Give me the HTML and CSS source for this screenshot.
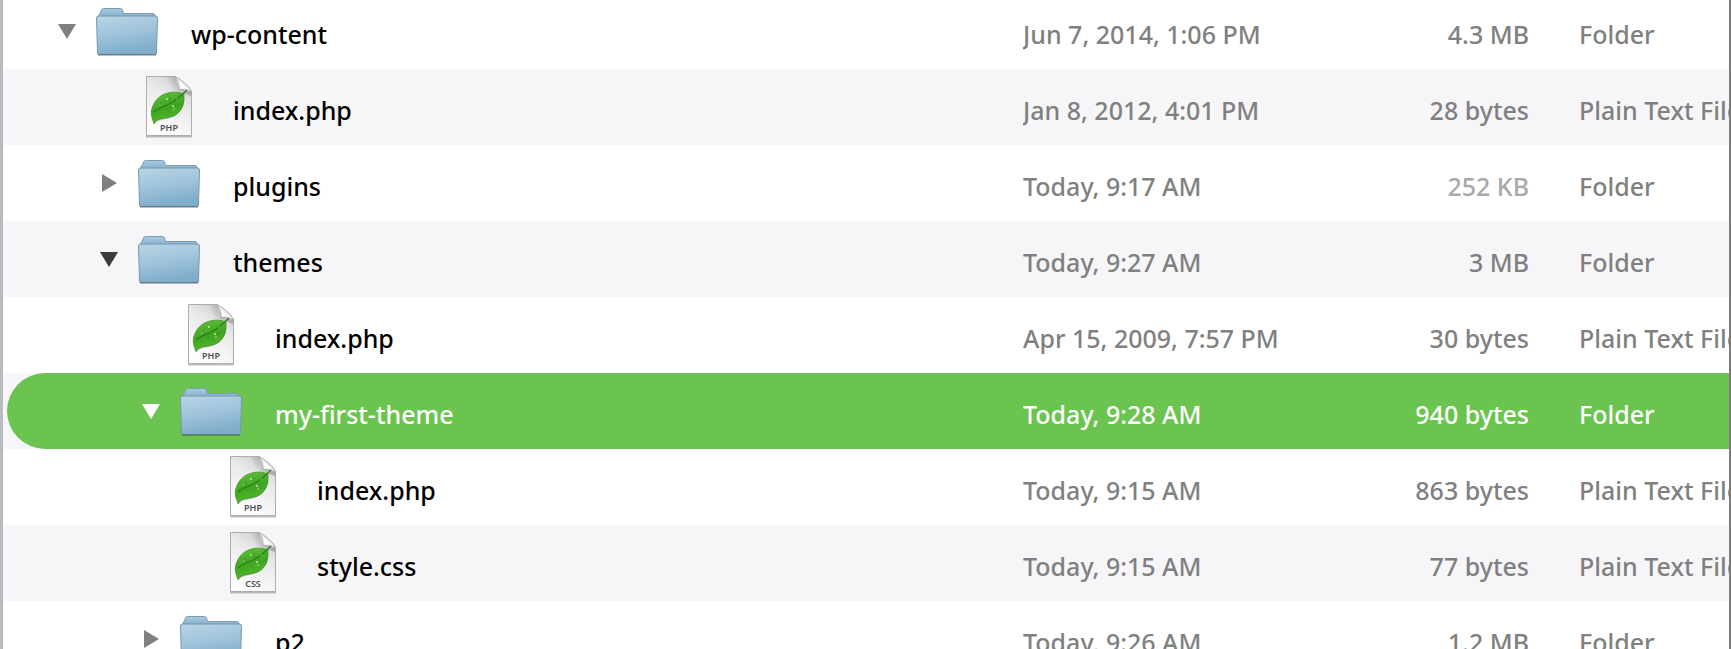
FILE: index.html
```
<!DOCTYPE html>
<html lang="en">
<head>
<meta charset="utf-8">
<title>wp-content</title>
<link rel="stylesheet" href="styles.css">
</head>
<body>
<svg class="defs" aria-hidden="true">
  <defs>
    <linearGradient id="front" x1="0" y1="0" x2="0.25" y2="1">
      <stop offset="0" stop-color="#bad4e5"/><stop offset="0.5" stop-color="#a0c4db"/><stop offset="1" stop-color="#80adcb"/>
    </linearGradient>
    <linearGradient id="back" x1="0" y1="0" x2="0" y2="1">
      <stop offset="0" stop-color="#a9cbe1"/><stop offset="1" stop-color="#82b0cd"/>
    </linearGradient>
    <linearGradient id="paper" x1="1" y1="0" x2="0.5" y2="1">
      <stop offset="0" stop-color="#c4c4c4"/><stop offset="0.45" stop-color="#e9e9e9"/><stop offset="1" stop-color="#fdfdfd"/>
    </linearGradient>
    <linearGradient id="curl" x1="1" y1="0" x2="0" y2="1">
      <stop offset="0.3" stop-color="#b4b4b4"/><stop offset="0.55" stop-color="#ffffff"/><stop offset="1" stop-color="#e4e4e4"/>
    </linearGradient>
    <linearGradient id="shade" x1="1" y1="0" x2="0" y2="0.5">
      <stop offset="0" stop-color="#555" stop-opacity="0.75"/><stop offset="1" stop-color="#999" stop-opacity="0"/>
    </linearGradient>
    <linearGradient id="leaf" x1="0.3" y1="0" x2="0.6" y2="1">
      <stop offset="0" stop-color="#62bd3c"/><stop offset="0.5" stop-color="#3fa522"/><stop offset="1" stop-color="#58bd2b"/>
    </linearGradient>
    <symbol id="folder" viewBox="0 0 64 64">
      <path d="M3 56.5H61" stroke="#000" stroke-opacity="0.25"/>
      <path d="M4 18V16Q4 15 5 14.500L6.500 11Q7 9.500 8.500 9.500H25.500Q27 9.500 27.500 11L28.500 14.500H58Q59.500 14.500 60 16V18Z" fill="url(#back)" stroke="#7e9cb0"/>
      <path d="M3.500 17H60.500Q62.500 17 62.500 19L61.500 54Q61.500 55.500 60 55.500H4Q2.500 55.500 2.500 54L1.500 19Q1.500 17 3.500 17Z" fill="url(#front)" stroke="#7799af"/>
      <path d="M3.500 17.500H60.500" stroke="#8fb3ca"/>
      <path d="M3 55.500H61" stroke="#5e7d93"/>
    </symbol>
    <symbol id="document" viewBox="0 0 64 64">
      <path d="M9 61.500H55" stroke="#000" stroke-opacity="0.25" stroke-width="2"/>
      <path d="M9.500 1.500H38L54.500 16V60.500H9.500Z" fill="url(#paper)" stroke="#adadad"/>
      <path d="M30 2H38L42 14L54 17V21L36 15Z" fill="url(#shade)"/>
      <path d="M37.500 1.500Q42 3 47 7.500Q53 12 54.500 17Q49 13 42 14.500Q42.500 6 37.500 1.500Z" fill="url(#curl)" stroke="#999" stroke-width="0.700"/>
      <path d="M17 49C19 43 27 45 35 41C43 37 47 29 47 19" fill="none" stroke="#000" stroke-opacity="0.2" stroke-width="2"/>
      <path d="M17 48.500C15 43 13 38 15.500 32C18 25 23 20 31 18C37 16.500 43 17 46 19C48 27 46 34 40 39C32 45 21 41 17 48.500Z" fill="url(#leaf)" stroke="#36931f" stroke-width="0.800"/>
      <path d="M17 37C22 32 27 32 33 28.500C40 25 45 20 50 15" fill="none" stroke="#287d17" stroke-width="1.300"/>
      <path d="M25 33L24 26M32 30L33 22M28 32L34 38M37 27L41 34" fill="none" stroke="#379721" stroke-width="0.700"/>
      <g fill="#c9efb8"><circle cx="30" cy="24" r="0.900"/><circle cx="36" cy="31" r="0.900"/><circle cx="37" cy="34" r="0.700"/><circle cx="40" cy="24" r="0.600"/><circle cx="23" cy="30" r="0.600"/></g>
    </symbol>
  </defs>
</svg>
<main class="browser">
<table class="files">
  <colgroup><col><col class="col-date"><col class="col-size"><col class="col-kind"></colgroup>
  <tbody>
    <tr>
      <td class="name"><div class="entry level-0"><button class="toggle" aria-label="Collapse wp-content"><svg class="arrow" viewBox="0 0 18 18"><path d="M0 2H18L9 17Z"/></svg></button><svg class="icon"><use href="#folder"/></svg><span>wp-content</span></div></td>
      <td>Jun 7, 2014, 1:06 PM</td><td class="size">4.3 MB</td><td class="kind">Folder</td>
    </tr>
    <tr>
      <td class="name"><div class="entry level-1"><svg class="icon" viewBox="0 0 64 64"><use href="#document"/><text class="ext" x="32" y="56">PHP</text></svg><span>index.php</span></div></td>
      <td>Jan 8, 2012, 4:01 PM</td><td class="size">28 bytes</td><td class="kind">Plain Text File</td>
    </tr>
    <tr>
      <td class="name"><div class="entry level-1"><button class="toggle" aria-label="Expand plugins"><svg class="arrow" viewBox="0 0 18 18"><path d="M2 0V18L17 9Z"/></svg></button><svg class="icon"><use href="#folder"/></svg><span>plugins</span></div></td>
      <td>Today, 9:17 AM</td><td class="size pending">252 KB</td><td class="kind">Folder</td>
    </tr>
    <tr>
      <td class="name"><div class="entry level-1"><button class="toggle active" aria-label="Collapse themes"><svg class="arrow" viewBox="0 0 18 18"><path d="M0 2H18L9 17Z"/></svg></button><svg class="icon"><use href="#folder"/></svg><span>themes</span></div></td>
      <td>Today, 9:27 AM</td><td class="size">3 MB</td><td class="kind">Folder</td>
    </tr>
    <tr>
      <td class="name"><div class="entry level-2"><svg class="icon" viewBox="0 0 64 64"><use href="#document"/><text class="ext" x="32" y="56">PHP</text></svg><span>index.php</span></div></td>
      <td>Apr 15, 2009, 7:57 PM</td><td class="size">30 bytes</td><td class="kind">Plain Text File</td>
    </tr>
    <tr class="selected">
      <td class="name"><div class="entry level-2"><button class="toggle" aria-label="Collapse my-first-theme"><svg class="arrow" viewBox="0 0 18 18"><path d="M0 2H18L9 17Z"/></svg></button><svg class="icon"><use href="#folder"/></svg><span>my-first-theme</span></div></td>
      <td>Today, 9:28 AM</td><td class="size">940 bytes</td><td class="kind">Folder</td>
    </tr>
    <tr>
      <td class="name"><div class="entry level-3"><svg class="icon" viewBox="0 0 64 64"><use href="#document"/><text class="ext" x="32" y="56">PHP</text></svg><span>index.php</span></div></td>
      <td>Today, 9:15 AM</td><td class="size">863 bytes</td><td class="kind">Plain Text File</td>
    </tr>
    <tr>
      <td class="name"><div class="entry level-3"><svg class="icon" viewBox="0 0 64 64"><use href="#document"/><text class="ext" x="32" y="56">CSS</text></svg><span>style.css</span></div></td>
      <td>Today, 9:15 AM</td><td class="size">77 bytes</td><td class="kind">Plain Text File</td>
    </tr>
    <tr>
      <td class="name"><div class="entry level-2"><button class="toggle" aria-label="Expand p2"><svg class="arrow" viewBox="0 0 18 18"><path d="M2 0V18L17 9Z"/></svg></button><svg class="icon"><use href="#folder"/></svg><span>p2</span></div></td>
      <td>Today, 9:26 AM</td><td class="size">1.2 MB</td><td class="kind">Folder</td>
    </tr>
  </tbody>
</table>
</main>
</body>
</html>
```

FILE: styles.css
```
* {
  box-sizing: border-box;
}

body {
  margin: 0;
  background: #fff;
  color: #808080;
  font-family: "Noto Sans", "Open Sans", sans-serif;
  font-size: 25px;
  font-weight: 500;
}

.defs {
  position: absolute;
  width: 0;
  height: 0;
}

.browser {
  height: 100vh;
  overflow: hidden;
  border-left: 3px solid #b7babe;
  border-right: 2px solid #7b7b7b;
}

/* The list is scrolled slightly past its first row. */
.files {
  width: 100%;
  margin-top: -7px;
  table-layout: fixed;
  border-collapse: collapse;
}

.col-date {
  width: 320px;
}

.col-size {
  width: 206px;
}

.col-kind {
  width: 180px;
}

tr:nth-child(even) {
  background: #f6f6f9;
}

td {
  height: 76px;
  padding: 6px 0 0;
  line-height: 70px;
  white-space: nowrap;
  overflow: hidden;
}

.name {
  padding: 0;
  color: #000;
}

.size {
  padding-right: 20px;
  text-align: right;
}

.kind {
  padding-left: 30px;
}

.pending {
  color: #a9a9a9;
}

.entry {
  display: flex;
  align-items: center;
  justify-content: flex-start;
  height: 76px;
  margin-left: 4px;
}

.entry span {
  margin-left: 32px;
  padding-top: 6px;
}

.level-0 {
  padding-left: 88px;
}

.level-1 {
  padding-left: 130px;
}

.level-2 {
  padding-left: 172px;
}

.level-3 {
  padding-left: 214px;
}

.icon {
  flex: none;
  width: 64px;
  height: 64px;
}

.toggle {
  display: flex;
  width: 18px;
  margin-left: -37px;
  margin-right: 19px;
  padding: 0;
  border: 0;
  background: none;
  color: #808080;
}

.toggle.active {
  color: #3b3b3b;
}

.arrow {
  width: 18px;
  height: 18px;
  fill: currentColor;
}

.ext {
  fill: #505050;
  font-size: 9px;
  font-weight: 600;
  text-anchor: middle;
}

.selected td {
  background: #6ac44f;
  color: #fff;
}

.selected td.name {
  background: none;
}

.selected .entry {
  border-radius: 38px 0 0 38px;
  background: #6ac44f;
}

.selected .toggle {
  color: #fff;
}
```
